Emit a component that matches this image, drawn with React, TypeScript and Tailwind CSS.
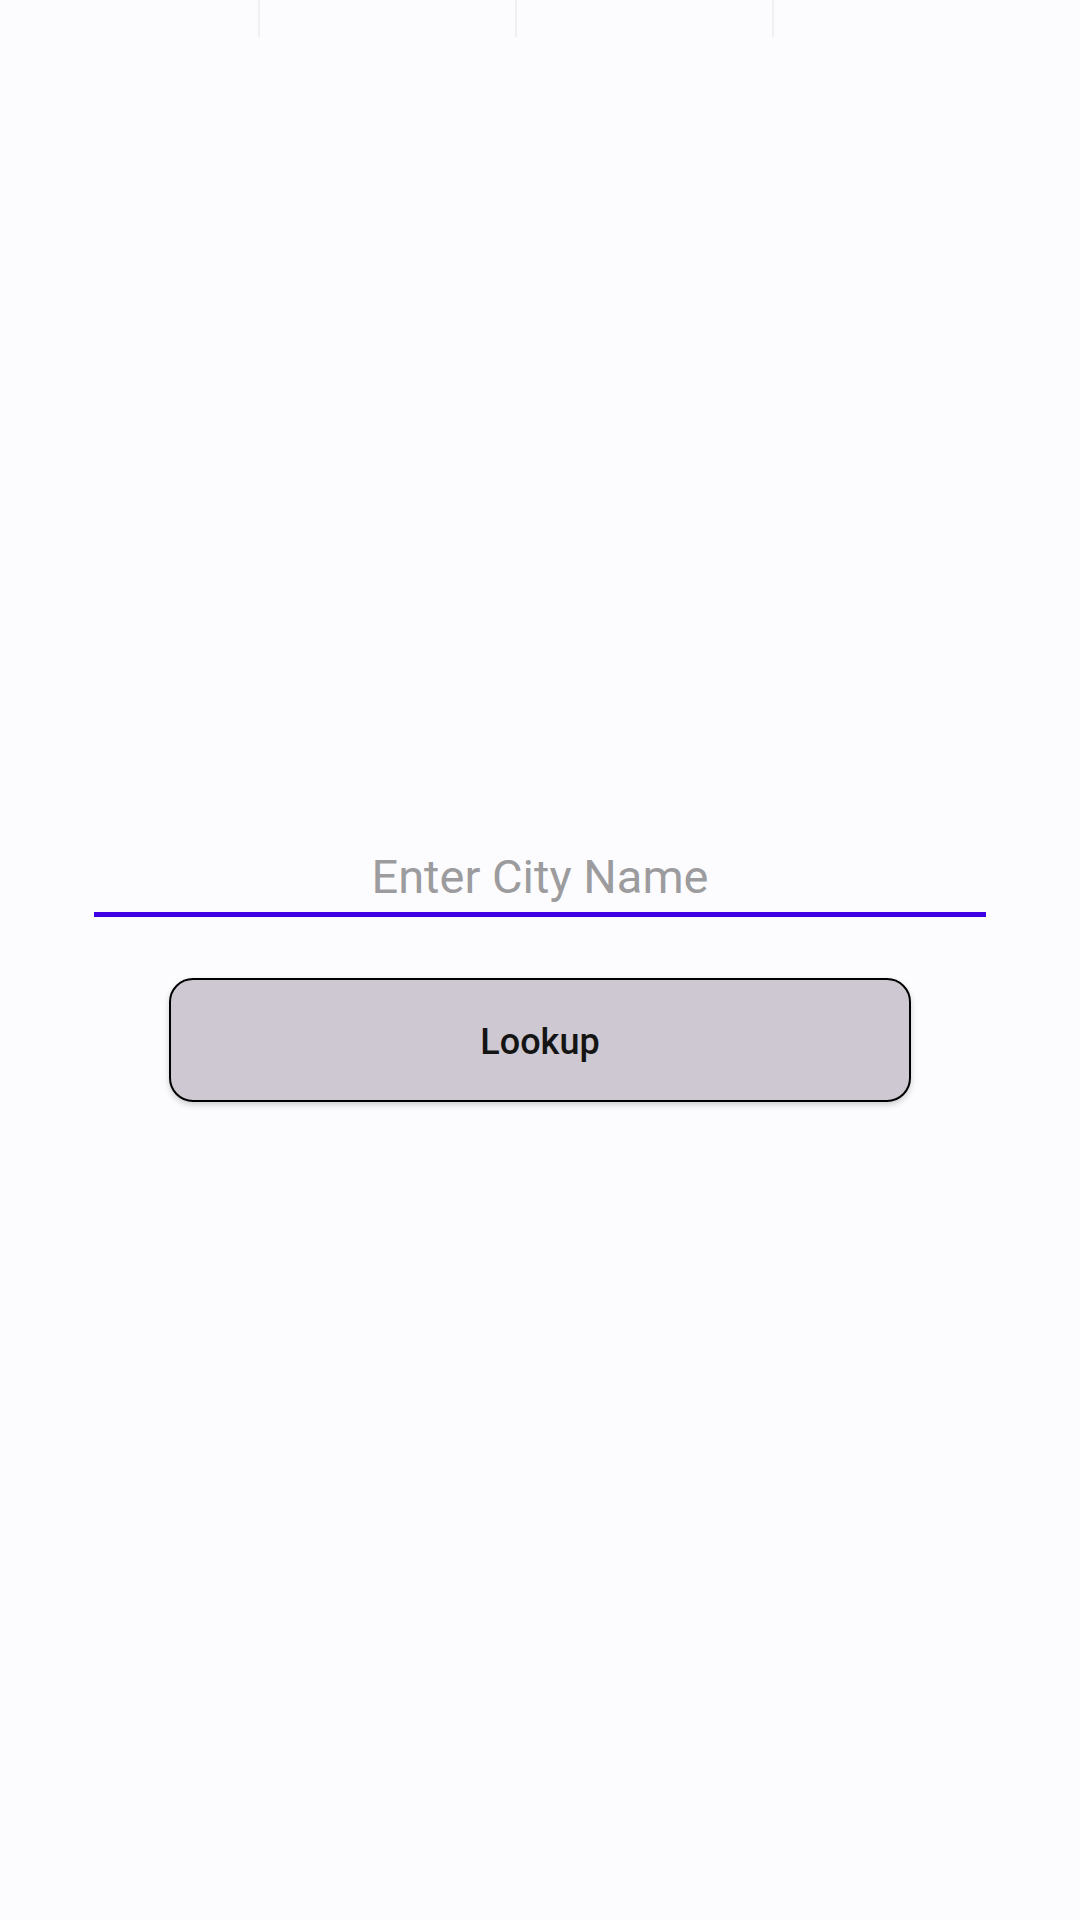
export default function App() {
  return (
    <div className="relative flex h-[1920px] w-[1080px] flex-col bg-[#fcfcff] font-['Roboto',sans-serif]">
      <div className="grid h-[37px] grid-cols-[260px_257px_257px_1fr]">
        <div className="border-r-2 border-[#f0f0f3]" />
        <div className="border-r-2 border-[#f0f0f3]" />
        <div className="border-r-2 border-[#f0f0f3]" />
        <div />
      </div>

      <div className="mx-[94px] mt-[808px] flex h-[72px] items-end justify-center border-b-[5px] border-[#3f00e6] pb-[12px]">
        <span className="text-[47px] leading-none text-[#9c9c9e]">Enter City Name</span>
      </div>

      <button className="mx-auto mt-[61px] flex h-[124px] w-[742px] items-center justify-center rounded-[24px] border-2 border-black bg-[#cdc8d1] pt-[3px] shadow-[0_3px_6px_rgba(0,0,0,0.18)]">
        <span className="text-[36px] font-medium text-[#141414]">Lookup</span>
      </button>
    </div>
  );
}
